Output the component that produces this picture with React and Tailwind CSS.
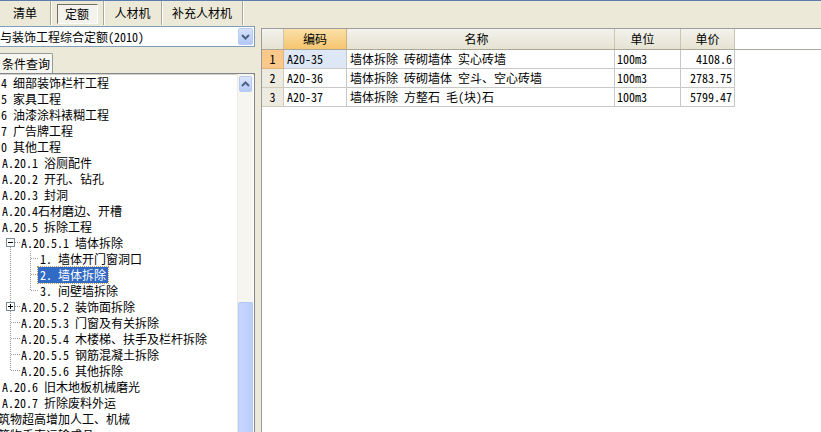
import React from 'react';

const tabs = [
  { label: '清单', w: 'w-[51px]' },
  { label: '定额', w: 'w-[53px]', active: true },
  { label: '人材机', w: 'w-[58px]' },
  { label: '补充人材机', w: 'w-[81px]' },
];

const tree = [
  { t: '4 细部装饰栏杆工程', x: 'pl-[1px]' },
  { t: '5 家具工程', x: 'pl-[1px]' },
  { t: '6 油漆涂料裱糊工程', x: 'pl-[1px]' },
  { t: '7 广告牌工程', x: 'pl-[1px]' },
  { t: '0 其他工程', x: 'pl-[1px]' },
  { t: 'A.20.1 浴厕配件', x: 'pl-[2px]' },
  { t: 'A.20.2 开孔、钻孔', x: 'pl-[2px]' },
  { t: 'A.20.3 封洞', x: 'pl-[2px]' },
  { t: 'A.20.4石材磨边、开槽', x: 'pl-[2px]' },
  { t: 'A.20.5 拆除工程', x: 'pl-[2px]' },
  { t: 'A.20.5.1 墙体拆除', kind: 'open' },
  { t: '1. 墙体开门窗洞口', kind: 'child' },
  { t: '2. 墙体拆除', kind: 'child', sel: true },
  { t: '3. 间壁墙拆除', kind: 'childLast' },
  { t: 'A.20.5.2 装饰面拆除', kind: 'closed' },
  { t: 'A.20.5.3 门窗及有关拆除', kind: 'leaf' },
  { t: 'A.20.5.4 木楼梯、扶手及栏杆拆除', kind: 'leaf' },
  { t: 'A.20.5.5 钢筋混凝土拆除', kind: 'leaf' },
  { t: 'A.20.5.6 其他拆除', kind: 'leafLast' },
  { t: 'A.20.6 旧木地板机械磨光', x: 'pl-[2px]' },
  { t: 'A.20.7 折除废料外运', x: 'pl-[2px]' },
  { t: '筑物超高增加人工、机械', x: '-ml-[2px]' },
  { t: '筑物垂直运输成品', x: '-ml-[2px]' },
];

const rows = [
  { n: 1, code: 'A20-35', name: '墙体拆除 砖砌墙体 实心砖墙', unit: '100m3', price: '4108.6' },
  { n: 2, code: 'A20-36', name: '墙体拆除 砖砌墙体 空斗、空心砖墙', unit: '100m3', price: '2783.75' },
  { n: 3, code: 'A20-37', name: '墙体拆除 方整石 毛(块)石', unit: '100m3', price: '5799.47' },
];

const dot = { stroke: '#9c9c9c', strokeWidth: 1, strokeDasharray: '1 1' };

// connector lines of the tree, drawn per row
const Connector = ({ kind }) => {
  if (kind === 'open' || kind === 'closed') {
    return (
      <svg width="21" height="16" className="shrink-0">
        {kind === 'closed' && <line x1="10.5" y1="0" x2="10.5" y2="3" {...dot} />}
        <line x1="10.5" y1="12" x2="10.5" y2="16" {...dot} />
        <line x1="15" y1="7.5" x2="21" y2="7.5" {...dot} />
        <rect x="6.5" y="3.5" width="8" height="8" fill="#fff" stroke="#7a8a99" />
        <line x1="8" y1="7.5" x2="13" y2="7.5" stroke="#000" />
        {kind === 'closed' && <line x1="10.5" y1="5" x2="10.5" y2="10" stroke="#000" />}
      </svg>
    );
  }
  if (kind === 'child' || kind === 'childLast') {
    return (
      <svg width="40" height="16" className="shrink-0">
        <line x1="10.5" y1="0" x2="10.5" y2="16" {...dot} />
        <line x1="30.5" y1="0" x2="30.5" y2={kind === 'childLast' ? 8 : 16} {...dot} />
        <line x1="31" y1="7.5" x2="38" y2="7.5" {...dot} />
      </svg>
    );
  }
  return (
    <svg width="21" height="16" className="shrink-0">
      <line x1="10.5" y1="0" x2="10.5" y2={kind === 'leafLast' ? 8 : 16} {...dot} />
      <line x1="11" y1="7.5" x2="20" y2="7.5" {...dot} />
    </svg>
  );
};

const App = () => {
  return (
    <div className="w-[821px] h-[432px] overflow-hidden bg-[#ECE9D8] text-[12px] leading-[16px] text-black font-['Noto_Sans_Mono_CJK_SC','Noto_Sans_CJK_SC',sans-serif] flex flex-col">
      {/* Top tab bar */}
      <div className="h-[25px] shrink-0 border-t border-[#5a7eb0] flex items-stretch">
        {tabs.map((tab) => (
          <div key={tab.label} className={`${tab.w} flex items-center justify-center border-r border-[#ACA899] shadow-[1px_0_0_#fff]`}>
            {tab.active ? (
              <div className="w-[41px] h-[20px] mt-[1px] flex items-center justify-center border border-t-[#716F64] border-l-[#716F64] border-r-white border-b-white bg-[#F3F2EC]">
                {tab.label}
              </div>
            ) : (
              <span>{tab.label}</span>
            )}
          </div>
        ))}
      </div>

      <div className="flex-1 flex min-h-0">
        {/* Left panel */}
        <div className="w-[255px] shrink-0 flex flex-col">
          <div className="mt-[1px] h-[21px] bg-white border border-l-0 border-[#7F9DB9] flex items-center">
            <span className="flex-1 whitespace-nowrap">与装饰工程综合定额(2010)</span>
            <div className="w-[15px] h-[17px] mr-[1px] rounded-[2px] border border-[#B9CBF3] bg-gradient-to-b from-[#D6E2FC] to-[#B3C8F5] flex items-center justify-center">
              <svg width="9" height="6" viewBox="0 0 9 6">
                <path d="M1 1 L4.5 4.5 L8 1" fill="none" stroke="#4D6185" strokeWidth="2" />
              </svg>
            </div>
          </div>

          <div className="h-[26px] flex items-end">
            <div className="h-[20px] w-[53px] border border-b-0 border-l-0 border-[#919B9C] bg-[#F7F6F0] flex items-center whitespace-nowrap pl-[2px] rounded-tr-[2px]">
              条件查询
            </div>
          </div>

          <div className="flex-1 min-h-0 border-t border-r border-[#828790] flex bg-white shadow-[inset_0_1px_0_#D4D0C8]">
            <div className="flex-1 min-w-0 overflow-hidden pt-[1px]">
              {tree.map((node) => (
                <div key={node.t} className="h-[16px] flex items-center whitespace-nowrap">
                  {node.kind ? (
                    <>
                      <Connector kind={node.kind} />
                      <span className={node.sel ? 'bg-[#316AC5] text-white px-[2px] -ml-[2px] outline outline-1 outline-dotted outline-[#c0a060]' : ''}>
                        {node.t}
                      </span>
                    </>
                  ) : (
                    <span className={node.x}>{node.t}</span>
                  )}
                </div>
              ))}
            </div>
            {/* vertical scrollbar */}
            <div className="w-[16px] shrink-0 mr-[1px] flex flex-col bg-[#F6F5F0] border-l border-[#EEEDE5] pt-[2px]">
              <div className="h-[16px] mx-[1px] rounded-[2px] border border-[#B9CBF3] bg-gradient-to-b from-[#DCE6FD] to-[#B6CAF6] flex items-center justify-center">
                <svg width="9" height="6" viewBox="0 0 9 6">
                  <path d="M1 5 L4.5 1.5 L8 5" fill="none" stroke="#4D6185" strokeWidth="2" />
                </svg>
              </div>
              <div className="h-[210px]" />
              <div className="flex-1 rounded-t-[2px] border border-b-0 border-[#B4C8F6] bg-gradient-to-r from-[#C7D6FD] to-[#BCCEFA]" />
            </div>
          </div>
        </div>

        {/* Splitter */}
        <div className="w-[6px] shrink-0" />

        {/* Right grid */}
        <div className="flex-1 mt-[3px] border-t border-l border-[#9C9C9C] bg-white">
          <div className="flex h-[21px] border-b border-[#ACA899]">
            <div className="w-[22px] bg-gradient-to-b from-[#F3F2EC] to-[#E6E3D3] border-r border-[#C8C5B4]" />
            <div className="w-[63px] flex items-center justify-center bg-gradient-to-b from-[#FBE0A8] to-[#F5C56F] border-r border-[#D6B07A]">编码</div>
            <div className="w-[268px] flex items-center justify-center bg-gradient-to-b from-[#F3F2EC] to-[#E6E3D3] border-r border-[#C8C5B4] pr-[8px]">名称</div>
            <div className="w-[66px] flex items-center justify-center bg-gradient-to-b from-[#F3F2EC] to-[#E6E3D3] border-r border-[#C8C5B4] pr-[10px]">单位</div>
            <div className="w-[54px] flex items-center justify-center bg-gradient-to-b from-[#F3F2EC] to-[#E6E3D3] border-r border-[#C8C5B4]">单价</div>
          </div>
          {rows.map((r, i) => (
            <div key={r.n} className="flex h-[19px]">
              <div className={`w-[22px] flex items-center justify-center border-r border-b ${i === 0 ? 'bg-[#F9C88A] border-[#E3B27A]' : 'bg-[#EDEBE0] border-[#CFCCBE]'}`}>{r.n}</div>
              <div className={`w-[63px] flex items-center pl-[3px] border-r border-b border-[#C8C8C8] ${i === 0 ? 'bg-[#DDE7F5]' : ''}`}>{r.code}</div>
              <div className="w-[268px] flex items-center pl-[3px] border-r border-b border-[#C8C8C8] whitespace-nowrap">{r.name}</div>
              <div className="w-[66px] flex items-center pl-[2px] border-r border-b border-[#C8C8C8]">{r.unit}</div>
              <div className="w-[54px] flex items-center justify-end pr-[2px] border-r border-b border-[#C8C8C8]">{r.price}</div>
            </div>
          ))}
        </div>
      </div>
    </div>
  );
};

export default App;
